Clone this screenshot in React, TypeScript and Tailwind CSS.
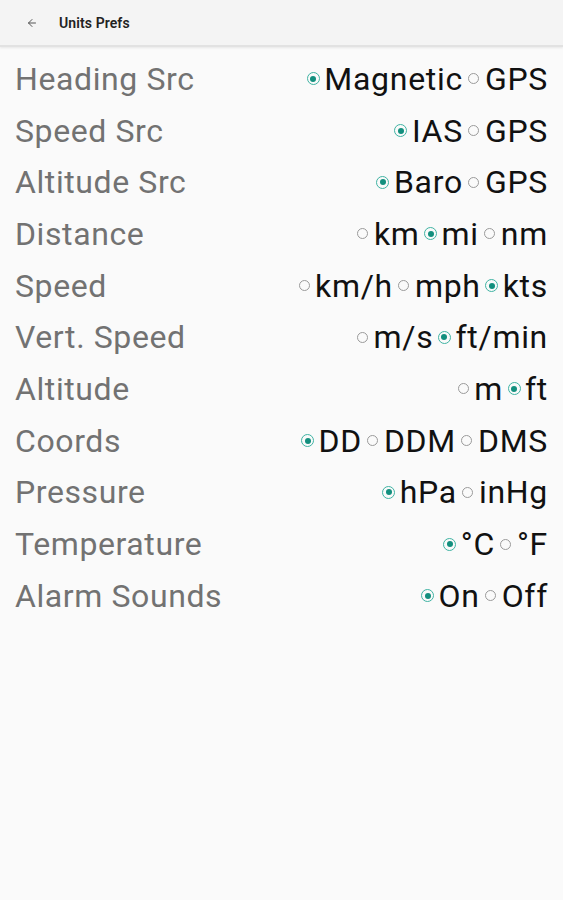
import { ArrowLeft } from "lucide-react";

interface Pref {
  label: string;
  options: string[];
  selected: number;
}

const prefs: Pref[] = [
  { label: "Heading Src", options: ["Magnetic", "GPS"], selected: 0 },
  { label: "Speed Src", options: ["IAS", "GPS"], selected: 0 },
  { label: "Altitude Src", options: ["Baro", "GPS"], selected: 0 },
  { label: "Distance", options: ["km", "mi", "nm"], selected: 1 },
  { label: "Speed", options: ["km/h", "mph", "kts"], selected: 2 },
  { label: "Vert. Speed", options: ["m/s", "ft/min"], selected: 1 },
  { label: "Altitude", options: ["m", "ft"], selected: 1 },
  { label: "Coords", options: ["DD", "DDM", "DMS"], selected: 0 },
  { label: "Pressure", options: ["hPa", "inHg"], selected: 0 },
  { label: "Temperature", options: ["°C", "°F"], selected: 0 },
  { label: "Alarm Sounds", options: ["On", "Off"], selected: 0 },
];

function Radio({ on }: { on: boolean }) {
  if (on) {
    return (
      <span className="flex h-[13px] w-[13px] items-center justify-center rounded-full border-[1.5px] border-[#3fb3a3]">
        <span className="h-[6px] w-[6px] rounded-full bg-[#138f7e]" />
      </span>
    );
  }
  return <span className="h-[11px] w-[11px] rounded-full border border-[#9a9a9a]" />;
}

export default function App() {
  return (
    <div className="min-h-[900px] bg-[#fafafa] font-['Roboto',sans-serif]">
      <div className="flex h-[47px] items-center border-b-2 border-[#e2e2e2] bg-[#f4f4f4] shadow-[0_1px_2px_rgba(0,0,0,0.08)]">
        <ArrowLeft className="ml-[26px] h-[12px] w-[12px] text-[#555]" strokeWidth={2} />
        <span className="ml-[21px] pt-[1px] text-[14px] font-semibold tracking-[0.1px] text-[#222]">Units Prefs</span>
      </div>
      <div className="px-[15px] pt-[6px]">
        {prefs.map((p) => (
          <div key={p.label} className="flex h-[51.7px] items-center justify-between">
            <span className="text-[32px] leading-none tracking-[0.6px] text-[#727272]">{p.label}</span>
            <div className="flex items-center">
              {p.options.map((o, i) => (
                <label key={o} className="flex items-center">
                  <span className="flex w-[22px] justify-center">
                    <Radio on={i === p.selected} />
                  </span>
                  <span className="text-[32px] leading-none tracking-[0.7px] text-[#111]">{o}</span>
                </label>
              ))}
            </div>
          </div>
        ))}
      </div>
    </div>
  );
}
